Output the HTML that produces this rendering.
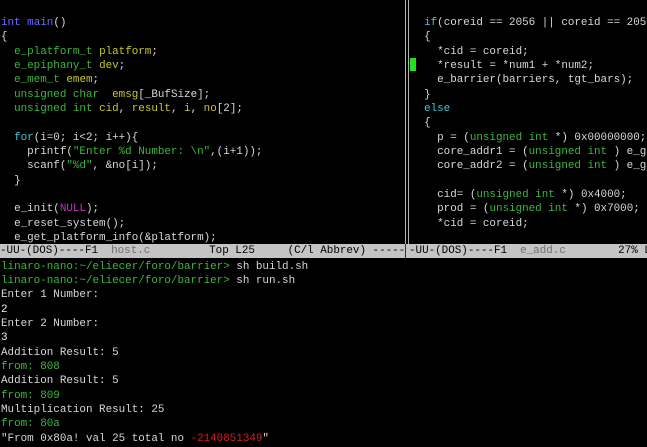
<!DOCTYPE html>
<html><head><meta charset="utf-8"><style>
body{margin:0;width:647px;height:447px;background:#000;overflow:hidden;position:relative;font-family:"Liberation Mono",monospace;font-size:10.9px;color:#d8d8d8}
.r{position:absolute;white-space:pre;height:14.33px;line-height:14.33px}
.k{color:#6a6aff}.t{color:#3cb83c}.y{color:#c8c828}.c{color:#40c8d8}.s{color:#3cb83c}.m{color:#c030c0}.g{color:#3cb83c}.red{color:#d02020}.w{color:#f0f0f0}
.mode{background:#c4c4c4;color:#000}
.fn{color:#707070}
</style></head><body>
<div style="position:absolute;left:405px;top:0;width:1px;height:258px;background:#b0b0b0"></div>
<div style="position:absolute;left:408px;top:0;width:1px;height:258px;background:#b0b0b0"></div>
<div style="position:absolute;left:410px;top:58px;width:6px;height:13px;background:#20e020"></div>

<div class="r" style="left:1px;top:16px"><span class="k">int</span> <span class="k">main</span>()</div>
<div class="r" style="left:1px;top:30.3px">{</div>
<div class="r" style="left:1px;top:44.7px">  <span class="t">e_platform_t</span> <span class="y">platform</span>;</div>
<div class="r" style="left:1px;top:59px">  <span class="t">e_epiphany_t</span> <span class="y">dev</span>;</div>
<div class="r" style="left:1px;top:73.3px">  <span class="t">e_mem_t</span> <span class="y">emem</span>;</div>
<div class="r" style="left:1px;top:87.7px">  <span class="t">unsigned char</span>  <span class="y">emsg</span>[_BufSize];</div>
<div class="r" style="left:1px;top:102px">  <span class="t">unsigned int</span> <span class="y">cid</span>, <span class="y">result</span>, <span class="y">i</span>, <span class="y">no</span>[2];</div>
<div class="r" style="left:1px;top:130.7px">  <span class="c">for</span>(i=0; i&lt;2; i++){</div>
<div class="r" style="left:1px;top:145px">    printf(<span class="s">"Enter %d Number: \n"</span>,(i+1));</div>
<div class="r" style="left:1px;top:159.3px">    scanf(<span class="s">"%d"</span>, &amp;no[i]);</div>
<div class="r" style="left:1px;top:173.7px">  }</div>
<div class="r" style="left:1px;top:202.3px">  e_init(<span class="m">NULL</span>);</div>
<div class="r" style="left:1px;top:216.7px">  e_reset_system();</div>
<div class="r" style="left:1px;top:231px">  e_get_platform_info(&amp;platform);</div>

<div class="r" style="left:411px;top:16px">  <span class="c">if</span>(coreid == 2056 || coreid == 2057</div>
<div class="r" style="left:411px;top:30.3px">  {</div>
<div class="r" style="left:411px;top:44.7px">    *cid = coreid;</div>
<div class="r" style="left:411px;top:59px">    *result = *num1 + *num2;</div>
<div class="r" style="left:411px;top:73.3px">    e_barrier(barriers, tgt_bars);</div>
<div class="r" style="left:411px;top:87.7px">  }</div>
<div class="r" style="left:411px;top:102px">  <span class="c">else</span></div>
<div class="r" style="left:411px;top:116.3px">  {</div>
<div class="r" style="left:411px;top:130.7px">    p = (<span class="t">unsigned int</span> *) 0x00000000;</div>
<div class="r" style="left:411px;top:145px">    core_addr1 = (<span class="t">unsigned int</span> ) e_ge</div>
<div class="r" style="left:411px;top:159.3px">    core_addr2 = (<span class="t">unsigned int</span> ) e_ge</div>
<div class="r" style="left:411px;top:188px">    cid= (<span class="t">unsigned int</span> *) 0x4000;</div>
<div class="r" style="left:411px;top:202.3px">    prod = (<span class="t">unsigned int</span> *) 0x7000;</div>
<div class="r" style="left:411px;top:216.7px">    *cid = coreid;</div>

<div class="r mode" style="left:0;top:244px;width:405px">-UU-(DOS)----F1  <span class="fn">host.c</span>         Top L25     (C/l Abbrev) ------</div>
<div class="r mode" style="left:409px;top:244px;width:238px">-UU-(DOS)----F1  <span class="fn">e_add.c</span>        27% L</div>
<div style="position:absolute;left:405px;top:244px;width:4px;height:14px;background:#c4c4c4;border-left:1px solid #333"></div>

<div class="r" style="left:1px;top:259.7px"><span class="g">linaro-nano:~/eliecer/foro/barrier&gt;</span> sh build.sh</div>
<div class="r" style="left:1px;top:274px"><span class="g">linaro-nano:~/eliecer/foro/barrier&gt;</span> sh run.sh</div>
<div class="r" style="left:1px;top:288.3px">Enter 1 Number:</div>
<div class="r w" style="left:1px;top:302.7px">2</div>
<div class="r" style="left:1px;top:317px">Enter 2 Number:</div>
<div class="r w" style="left:1px;top:331.3px">3</div>
<div class="r" style="left:1px;top:345.7px">Addition Result: 5</div>
<div class="r g" style="left:1px;top:360px">from: 808</div>
<div class="r" style="left:1px;top:374.3px">Addition Result: 5</div>
<div class="r g" style="left:1px;top:388.7px">from: 809</div>
<div class="r" style="left:1px;top:403px">Multiplication Result: 25</div>
<div class="r g" style="left:1px;top:417.3px">from: 80a</div>
<div class="r" style="left:1px;top:431.7px">"From 0x80a! val 25 total no <span class="red">-2140851349</span>"</div>
</body></html>
